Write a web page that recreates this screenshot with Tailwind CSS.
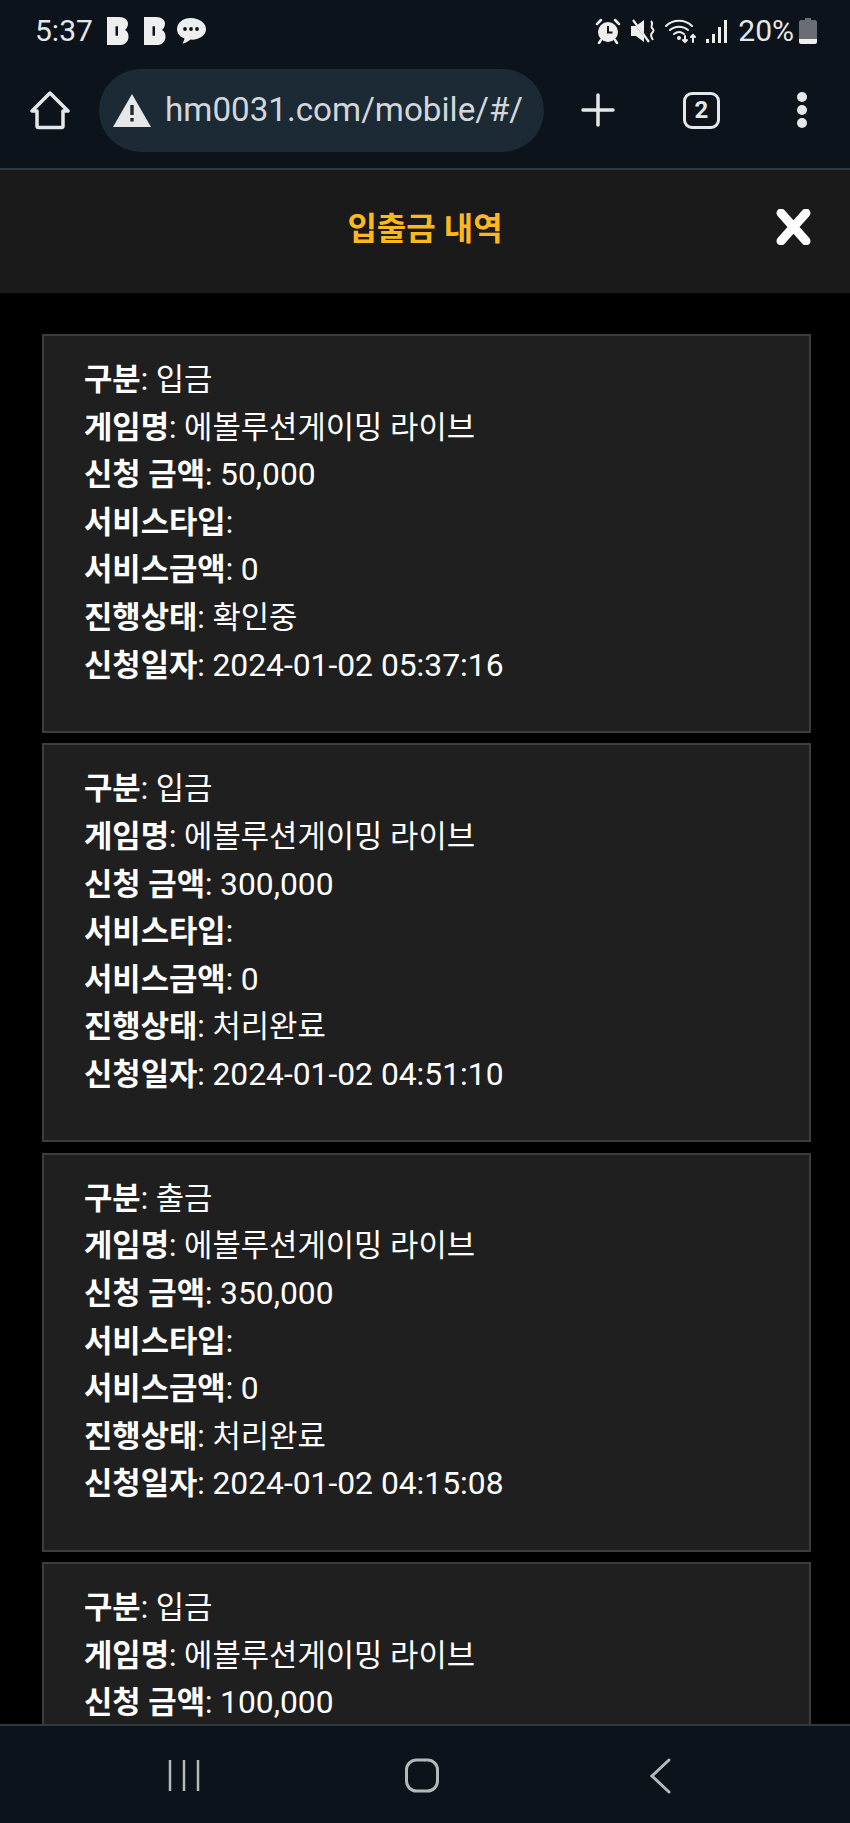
<!DOCTYPE html>
<html lang="ko">

<head>
    <meta charset="utf-8" />
    <meta name="viewport" content="width=device-width, initial-scale=1" />
    <title>입출금 내역</title>
    <script src="https://cdn.jsdelivr.net/npm/@tailwindcss/browser@4"></script>
</head>

<body class="bg-black">
    <div class="w-[850px] h-[1823px] flex flex-col overflow-hidden font-['Roboto','Noto_Sans_CJK_KR',sans-serif]">
        <!-- status bar + browser toolbar -->
        <div class="h-[170px] shrink-0 bg-[#0c131a] border-b-2 border-[#30383f] text-[#e6e7e8]">
            <div class="h-[62px] pl-[35px] pr-[33px] flex items-center justify-between">
                <div class="flex items-center">
                    <span class="text-[30px] leading-none w-[58px]">5:37</span>
                    <svg class="ml-[14px]" width="22" height="28" viewBox="0 0 22 27" preserveAspectRatio="none"><path fill="#eee" fill-rule="evenodd" d="M0 0h12c6 0 9 3 9 6.500 0 2.500-1.200 4.500-3 6 2.200 1 3.500 3 3.500 6.500 0 4.500-3.500 8-9 8H0zM8.500 9v9h2.500V9z"/></svg>
                    <svg class="ml-[15px]" width="22" height="28" viewBox="0 0 22 27" preserveAspectRatio="none"><path fill="#eee" fill-rule="evenodd" d="M0 0h12c6 0 9 3 9 6.500 0 2.500-1.200 4.500-3 6 2.200 1 3.500 3 3.500 6.500 0 4.500-3.500 8-9 8H0zM8.500 9v9h2.500V9z"/></svg>
                    <svg class="ml-[10px]" width="30" height="28" viewBox="0 0 30 28"><path fill="#eee" d="M15 1C7 1 1 5.800 1 12c0 4.300 3 7.800 7.500 9.600-.3 1.800-1 3.400-2 5 3-.6 6-2.200 8-4 .5 0 1 .1 1.500.1 8 0 14-4.800 14-10.700S23 1 15 1z"/><circle cx="9" cy="12" r="1.900" fill="#0c131a"/><circle cx="15" cy="12" r="1.900" fill="#0c131a"/><circle cx="21" cy="12" r="1.900" fill="#0c131a"/></svg>
                </div>
                <div class="flex items-center">
                    <svg width="26" height="26" viewBox="0 0 26 26"><path fill="none" stroke="#eee" stroke-width="2.500" stroke-linecap="round" d="M2 6l4-4M24 6l-4-4M6 22l-2 3M20 22l2 3"/><circle cx="13" cy="14" r="10" fill="#eee"/><path fill="none" stroke="#0c131a" stroke-width="2" d="M13 8v6.500h4.500"/></svg>
                    <svg class="ml-[9px]" width="26" height="26" viewBox="0 0 26 26"><path fill="#eee" d="M1 8h5l8-6v22l-8-6H1z"/><path stroke="#0c131a" stroke-width="2" d="M2 1l17 23"/><path stroke="#eee" stroke-width="2.200" d="M3 2l16 22"/><path fill="none" stroke="#eee" stroke-width="2" d="M21 3c3 3-1 5 1 7s2 3 0 5-1 4 1 7"/></svg>
                    <svg class="ml-[9px]" width="34" height="26" viewBox="0 0 34 26"><g fill="none" stroke="#eee" stroke-width="2" stroke-linecap="round"><path d="M1 8c7-7 19-7 26 0"/><path d="M5 12c5-4.500 13-4.500 18 0"/><path d="M9 16c3-2.500 7-2.500 10 0"/><path d="M20 18v6M18 22l2 2 2-2M28 24v-7M26 19l2-2 2 2"/></g><circle cx="14" cy="20" r="2" fill="#eee"/></svg>
                    <div class="ml-[7px] h-[24px] flex items-end gap-[3px]">
                        <span class="w-[3px] h-[4px] bg-[#eee]"></span><span class="w-[3px] h-[9px] bg-[#eee]"></span><span class="w-[3px] h-[16px] bg-[#eee]"></span><span class="w-[3px] h-[23px] bg-[#eee]"></span>
                    </div>
                    <span class="ml-[11px] text-[30px] leading-none">20%</span>
                    <svg class="ml-[5px]" width="18" height="26" viewBox="0 0 18 26"><path fill="#6a6d71" d="M6 0h6v2h4c1 0 2 1 2 2v17H0V4c0-1 1-2 2-2h4z"/><path fill="#eee" d="M0 21h18v3c0 1-1 2-2 2H2c-1 0-2-1-2-2z"/></svg>
                </div>
            </div>
            <div class="h-[96px] flex items-center">
                <svg class="ml-[30px]" width="40" height="40" viewBox="0 0 40 40"><path fill="none" stroke="#e6e7e8" stroke-width="3.500" stroke-linejoin="round" d="M2 21 20 3l18 18h-5v15a1.500 1.500 0 0 1-1.500 1.500h-23A1.500 1.500 0 0 1 7 36V21z"/></svg>
                <div class="ml-[29px] w-[445px] h-[83px] rounded-full bg-[#1b2a35] flex items-center pl-[14px]">
                    <svg width="38" height="33" viewBox="0 0 38 33"><path fill="#e6e7e8" d="M19 0l19 33H0z"/><path fill="#1b2a35" d="M17.300 11h3.400v10h-3.400zM17.300 24h3.400v3.500h-3.400z"/></svg>
                    <span class="ml-[14px] text-[33.200px] leading-none text-[#d3d7da]">hm0031.com/mobile/#/</span>
                </div>
                <svg class="ml-[37px]" width="34" height="34" viewBox="0 0 34 34"><path fill="none" stroke="#e6e7e8" stroke-width="3.500" stroke-linecap="round" d="M17 2v30M2 17h30"/></svg>
                <div class="ml-[68px] w-[37px] h-[37px] rounded-[9px] border-[3.500px] border-[#e6e7e8] flex items-center justify-center text-[24px] font-bold leading-none">2</div>
                <div class="ml-[77px] flex flex-col gap-[3px]">
                    <span class="w-[10px] h-[10px] rounded-full bg-[#e6e7e8]"></span><span class="w-[10px] h-[10px] rounded-full bg-[#e6e7e8]"></span><span class="w-[10px] h-[10px] rounded-full bg-[#e6e7e8]"></span>
                </div>
            </div>
        </div>

        <!-- page header -->
        <div class="relative h-[123px] shrink-0 bg-[#1a1a1a] flex items-center justify-center pb-[6px]">
            <h1 class="text-[32px] font-bold leading-none text-[#fdb81e]">입출금 내역</h1>
            <svg class="absolute left-[776px] top-[39px]" width="36" height="36" viewBox="0 0 36 36"><path fill="none" stroke="#fff" stroke-width="9" stroke-linecap="round" d="M5 4l25 28M30 4 5 32"/></svg>
        </div>

        <!-- history list -->
        <div class="flex-1 overflow-hidden pt-[41px] pl-[42px] pr-[39px] flex flex-col gap-[10.400px]">
            <div class="shrink-0 h-[399px] bg-[#1f1f1f] border-2 border-[#3d3d3d] pl-[40px] pt-[20px] text-[30.800px] leading-[47.600px] text-white">
                <p><b>구분</b>: 입금</p>
                <p><b>게임명</b>: 에볼루션게이밍 라이브</p>
                <p><b>신청 금액</b>: <span class="text-[31.800px]">50,000</span></p>
                <p><b>서비스타입</b>:</p>
                <p><b>서비스금액</b>: <span class="text-[31.800px]">0</span></p>
                <p><b>진행상태</b>: 확인중</p>
                <p><b>신청일자</b>: <span class="text-[31.800px]">2024-01-02 05:37:16</span></p>
            </div>
            <div class="shrink-0 h-[399px] bg-[#1f1f1f] border-2 border-[#3d3d3d] pl-[40px] pt-[20px] text-[30.800px] leading-[47.600px] text-white">
                <p><b>구분</b>: 입금</p>
                <p><b>게임명</b>: 에볼루션게이밍 라이브</p>
                <p><b>신청 금액</b>: <span class="text-[31.800px]">300,000</span></p>
                <p><b>서비스타입</b>:</p>
                <p><b>서비스금액</b>: <span class="text-[31.800px]">0</span></p>
                <p><b>진행상태</b>: 처리완료</p>
                <p><b>신청일자</b>: <span class="text-[31.800px]">2024-01-02 04:51:10</span></p>
            </div>
            <div class="shrink-0 h-[399px] bg-[#1f1f1f] border-2 border-[#3d3d3d] pl-[40px] pt-[20px] text-[30.800px] leading-[47.600px] text-white">
                <p><b>구분</b>: 출금</p>
                <p><b>게임명</b>: 에볼루션게이밍 라이브</p>
                <p><b>신청 금액</b>: <span class="text-[31.800px]">350,000</span></p>
                <p><b>서비스타입</b>:</p>
                <p><b>서비스금액</b>: <span class="text-[31.800px]">0</span></p>
                <p><b>진행상태</b>: 처리완료</p>
                <p><b>신청일자</b>: <span class="text-[31.800px]">2024-01-02 04:15:08</span></p>
            </div>
            <div class="shrink-0 h-[399px] bg-[#1f1f1f] border-2 border-[#3d3d3d] pl-[40px] pt-[20px] text-[30.800px] leading-[47.600px] text-white">
                <p><b>구분</b>: 입금</p>
                <p><b>게임명</b>: 에볼루션게이밍 라이브</p>
                <p><b>신청 금액</b>: <span class="text-[31.800px]">100,000</span></p>
            </div>
        </div>

        <!-- android nav bar -->
        <div class="h-[99px] shrink-0 bg-[#0c131a] border-t-2 border-[#30383f] relative">
            <svg class="absolute left-[165px] top-[32px]" width="40" height="36" viewBox="0 0 40 36"><path stroke="#b5b8ba" stroke-width="2.500" d="M5 2v31M19 2v31M33 2v31"/></svg>
            <svg class="absolute left-[402px] top-[32px]" width="38" height="36" viewBox="0 0 38 36"><rect x="4.500" y="2" width="31" height="31" rx="10" fill="none" stroke="#b5b8ba" stroke-width="3"/></svg>
            <svg class="absolute left-[648px] top-[32px]" width="24" height="36" viewBox="0 0 24 36"><path fill="none" stroke="#b5b8ba" stroke-width="3" stroke-linecap="round" d="M21 2 4 18l17 16" /></svg>
        </div>
    </div>
</body>

</html>
